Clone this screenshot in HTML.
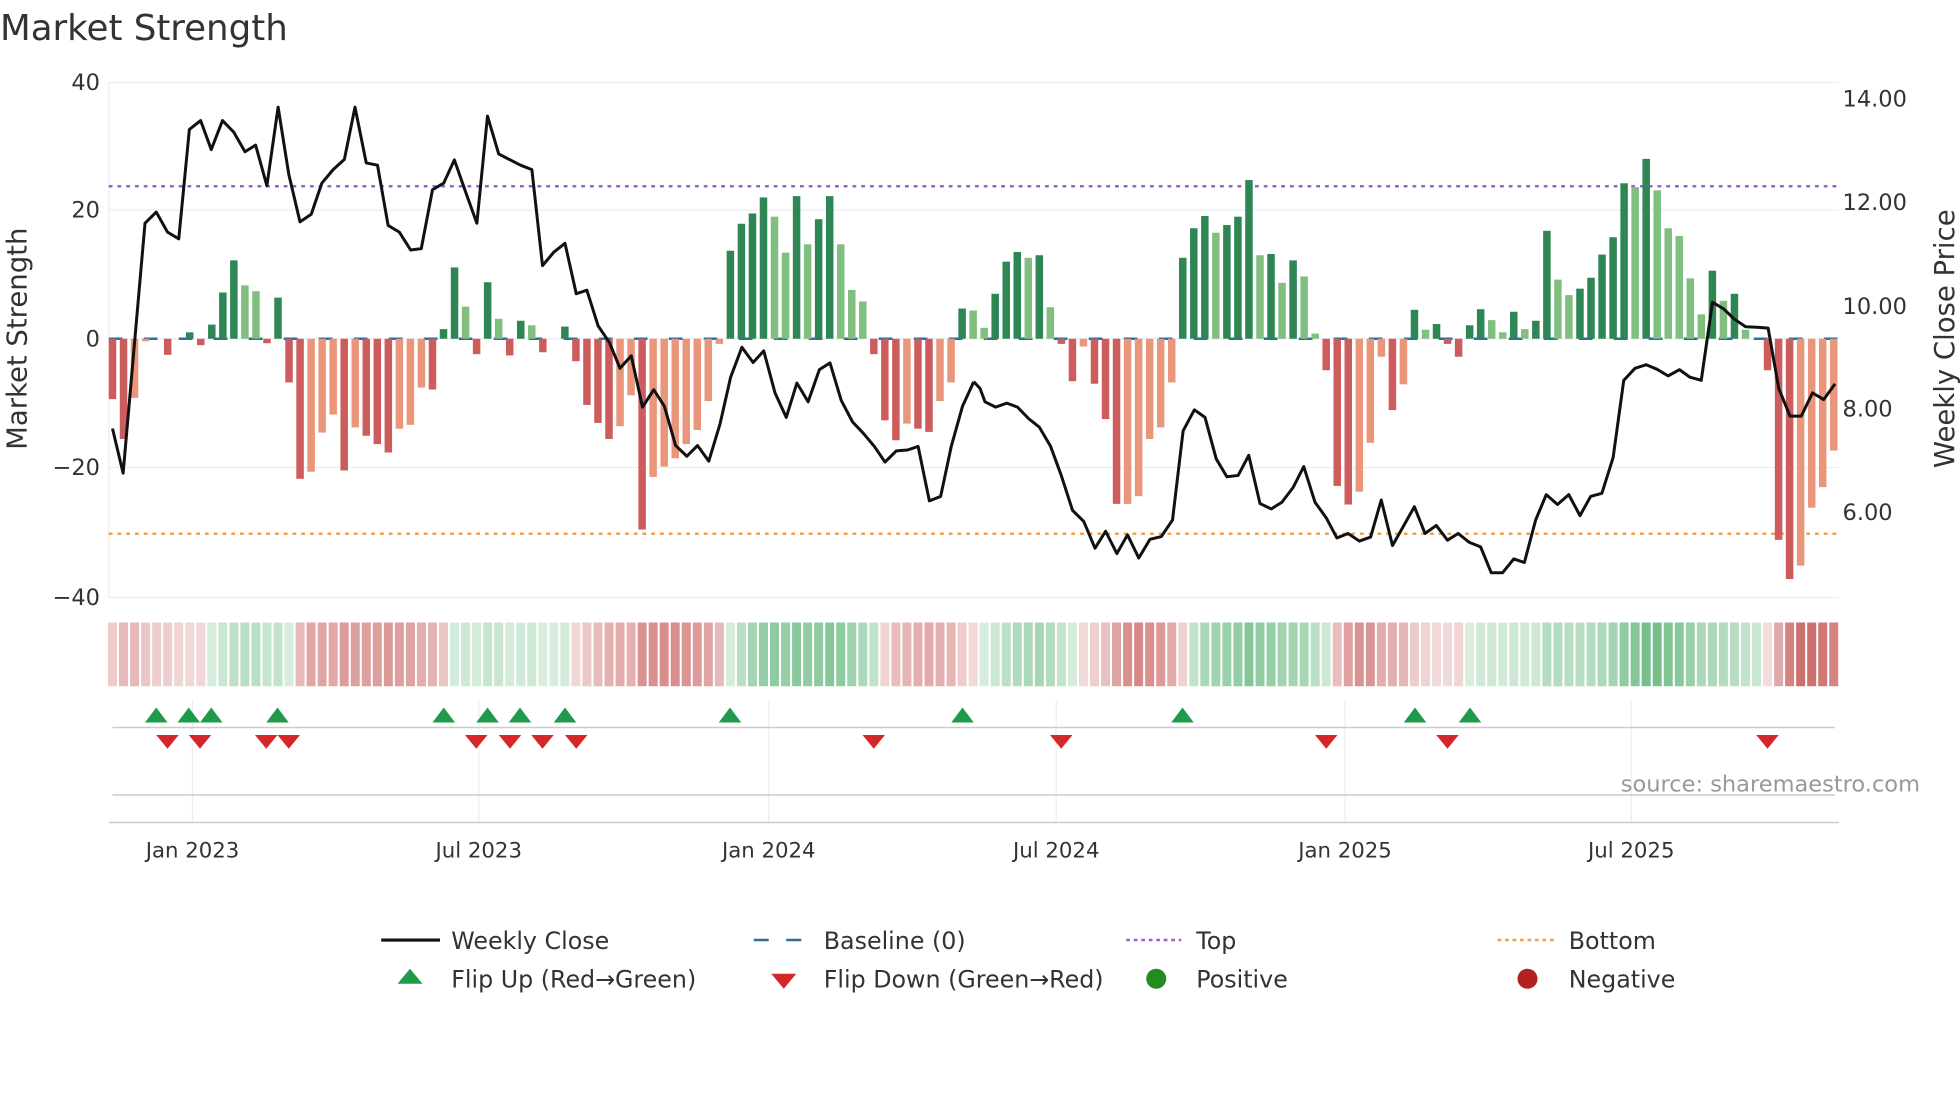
<!DOCTYPE html>
<html><head><meta charset="utf-8"><style>
html,body{margin:0;padding:0;background:#fff;}
svg{display:block;font-family:"DejaVu Sans","Liberation Sans",sans-serif;}
</style></head><body>
<svg id="s" width="1960" height="1102" viewBox="0 0 1568 881.6" xmlns="http://www.w3.org/2000/svg">
<text x="0" y="32" font-size="28.5" fill="#333">Market Strength</text>
<g stroke="#ebedf0" stroke-width="1">
<line x1="87" y1="66" x2="1471" y2="66"/><line x1="87" y1="168" x2="1471" y2="168"/>
<line x1="87" y1="271" x2="1471" y2="271"/><line x1="87" y1="374" x2="1471" y2="374"/>
<line x1="87" y1="478" x2="1471" y2="478"/><line x1="87" y1="66" x2="87" y2="478"/>
</g>
<g font-size="18" fill="#333" text-anchor="end">
<text x="80" y="72">40</text><text x="80" y="174">20</text><text x="80" y="277">0</text>
<text x="80" y="380">−20</text><text x="80" y="484">−40</text>
</g>
<g font-size="18" fill="#333">
<text x="1474" y="85">14.00</text><text x="1474" y="168">12.00</text><text x="1474" y="251">10.00</text>
<text x="1474" y="333">8.00</text><text x="1474" y="416">6.00</text>
</g>
<text transform="translate(21,271) rotate(-90)" font-size="22" fill="#333" text-anchor="middle">Market Strength</text>
<text transform="translate(1563,271) rotate(-90)" font-size="22" fill="#333" text-anchor="middle">Weekly Close Price</text>
<line x1="87" y1="149" x2="1471" y2="149" stroke="#9b5fd6" stroke-width="2" stroke-dasharray="3,4"/>
<line x1="87" y1="427" x2="1471" y2="427" stroke="#f0a050" stroke-width="2" stroke-dasharray="3,4"/>
<line x1="87" y1="271" x2="1471" y2="271" stroke="#2a6f9e" stroke-width="2" stroke-dasharray="11,17"/>
<g id="bars"></g>
<g id="strip"></g>
<g fill="none" stroke="#111" stroke-width="3" stroke-linejoin="round">
<path transform="scale(0.5,0.35714)" vector-effect="non-scaling-stroke" d="M180,960 L197,1060 L232,500 L250,475 L268,520 L286,535 L303,290 L321,270 L338,335 L356,270 L374,296 L392,340 L409,325 L427,416 L445,240 L462,390 L480,497 L498,480 L515,410 L533,380 L551,357 L568,240 L586,365 L604,370 L621,505 L639,520 L657,560 L674,557 L692,425 L710,410 L727,358 L745,430 L763,500 L780,260 L798,345 L816,358 L833,370 L851,380 L868,595 L886,565 L904,545 L922,658 L939,650 L957,730 L975,767 L992,825 L1010,797 L1028,912 L1046,873 L1063,910 L1081,998 L1099,1022 L1116,998 L1134,1033 L1152,950 L1169,845 L1187,778 L1205,812 L1222,786 L1240,880 L1258,935 L1275,858 L1293,900 L1311,828 L1328,813 L1346,897 L1364,945 L1381,970 L1399,1000 L1416,1035 L1434,1010 L1452,1008 L1469,1000 L1487,1122 L1505,1112 L1522,1000 L1540,910 L1558,855"/>
<path transform="translate(784,0) scale(0.5,0.35714)" vector-effect="non-scaling-stroke" d="M-10,855 L0,870 L8,900 L25,912 L43,903 L60,912 L78,938 L95,957 L113,1000 L130,1065 L148,1143 L166,1168 L184,1228 L201,1190 L219,1240 L236,1198 L254,1250 L272,1208 L290,1202 L308,1165 L325,965 L343,918 L360,935 L378,1028 L395,1068 L413,1065 L430,1020 L448,1128 L466,1140 L483,1125 L501,1092 L518,1045 L536,1125 L554,1160 L571,1205 L589,1195 L607,1212 L625,1203 L642,1120 L660,1222 L677,1180 L695,1135 L712,1195 L730,1177 L748,1210 L765,1195 L783,1215 L801,1225 L818,1283 L836,1283 L854,1252 L871,1260 L889,1165 L906,1108 L924,1130 L942,1108 L960,1155 L977,1112 L995,1105 L1013,1025 L1030,852 L1048,825 L1066,817 L1083,827 L1101,842 L1119,828 L1136,845 L1154,852 L1172,677 L1190,692 L1207,715 L1225,732 L1243,733 L1261,735 L1278,870 L1296,932 L1314,932 L1332,880 L1350,895 L1368,860"/>
</g>
<g stroke="#eee" stroke-width="1">
<line x1="154" y1="560" x2="154" y2="658"/><line x1="383" y1="560" x2="383" y2="658"/>
<line x1="615" y1="560" x2="615" y2="658"/><line x1="845" y1="560" x2="845" y2="658"/>
<line x1="1076" y1="560" x2="1076" y2="658"/><line x1="1305" y1="560" x2="1305" y2="658"/>
</g>
<line x1="90" y1="582" x2="1468" y2="582" stroke="#ccc" stroke-width="1.2"/>
<line x1="90" y1="636" x2="1468" y2="636" stroke="#ccc" stroke-width="1.2"/>
<line x1="87" y1="658" x2="1471" y2="658" stroke="#ccc" stroke-width="1.2"/>
<g id="mk"></g>
<text x="1536" y="633" font-size="18" fill="#999" text-anchor="end">source: sharemaestro.com</text>
<g font-size="17" fill="#333" text-anchor="middle">
<text x="154" y="686">Jan 2023</text><text x="383" y="686">Jul 2023</text><text x="615" y="686">Jan 2024</text>
<text x="845" y="686">Jul 2024</text><text x="1076" y="686">Jan 2025</text><text x="1305" y="686">Jul 2025</text>
</g>
<g font-size="19" fill="#333">
<line x1="305" y1="752" x2="352" y2="752" stroke="#111" stroke-width="2.5"/>
<text x="361" y="759">Weekly Close</text>
<line x1="603" y1="752" x2="647" y2="752" stroke="#2a6f9e" stroke-width="2" stroke-dasharray="12,14"/>
<text x="659" y="759">Baseline (0)</text>
<line x1="901" y1="752" x2="945" y2="752" stroke="#9b5fd6" stroke-width="2" stroke-dasharray="3,3"/>
<text x="957" y="759">Top</text>
<line x1="1198" y1="752" x2="1243" y2="752" stroke="#f0a050" stroke-width="2" stroke-dasharray="3,3"/>
<text x="1255" y="759">Bottom</text>
<polygon points="328,775 338,787 318,787" fill="#1e9a4a"/>
<text x="361" y="790">Flip Up (Red→Green)</text>
<polygon points="617,779 637,779 627,791" fill="#d62728"/>
<text x="659" y="790">Flip Down (Green→Red)</text>
<circle cx="925" cy="783" r="8" fill="#228b22"/>
<text x="957" y="790">Positive</text>
<circle cx="1222" cy="783" r="8" fill="#b22222"/>
<text x="1255" y="790">Negative</text>
</g>
</svg>
<script>
var v=[-9.4,-15.6,-9.2,-0.4,0,-2.5,0,1,-1,2.2,7.2,12.2,8.3,7.4,-0.7,6.4,-6.8,-21.8,-20.7,-14.6,-11.8,-20.5,-13.8,-15.1,-16.4,-17.7,-14,-13.4,-7.6,-7.9,1.5,11.1,5,-2.4,8.8,3.1,-2.6,2.8,2.1,-2.1,0,1.9,-3.5,-10.3,-13.1,-15.6,-13.6,-8.8,-29.7,-21.5,-19.9,-18.6,-16.4,-14.2,-9.7,-0.8,13.7,17.9,19.5,22,19,13.4,22.2,14.7,18.6,22.2,14.7,7.6,5.8,-2.4,-12.7,-15.8,-13.2,-14,-14.5,-9.7,-6.8,4.7,4.4,
1.7,7,12,13.5,12.6,13,4.9,-0.8,-6.6,-1.2,-7,-12.5,-25.7,-25.7,-24.5,-15.6,-13.8,-6.8,12.6,17.2,19.1,16.5,17.7,19,24.7,13,13.2,8.7,12.2,9.7,0.8,-4.9,-22.9,-25.8,-23.8,-16.2,-2.8,-11.1,-7.1,4.5,1.4,2.3,-0.8,-2.8,2.1,4.6,2.9,1,4.2,1.5,2.8,16.8,9.2,6.8,7.8,9.5,13.1,15.8,24.2,23.6,28,23.1,17.2,16,9.4,3.8,10.6,5.9,7,1.4,0,-4.9,-31.3,-37.4,-35.3,-26.3,-23.1,-17.4];
var NS="http://www.w3.org/2000/svg";
function el(p,t,a){var e=document.createElementNS(NS,t);for(var k in a)e.setAttribute(k,a[k]);document.getElementById(p).appendChild(e);}
var sp=(1467-90)/(v.length-1);
function mix(c,t){var r=Math.round(255+(c[0]-255)*t),g=Math.round(255+(c[1]-255)*t),b=Math.round(255+(c[2]-255)*t);return "rgb("+r+","+g+","+b+")";}
var sm=0;
for(var i=0;i<v.length;i++){
 var x=90+i*sp, val=v[i], p=i?v[i-1]:0;
 var dark=(Math.abs(val)>Math.abs(p))||(val*p<0);
 var col= val>=0 ? (dark?"#2e8655":"#80bf7f") : (dark?"#cd5c5c":"#e9967a");
 var h=Math.abs(val)*5.14;
 if(h>0.3) el("bars","rect",{x:x-3,y:val>=0?271-h:271,width:6,height:h,fill:col});
 sm=sm*0.6+val*0.4;
 var t=0.2+0.65*Math.min(1,Math.abs(sm)/30);
 el("strip","rect",{x:x-3.6,y:498,width:7.2,height:51,fill:sm>=0?mix([60,165,90],t):mix([192,75,72],t)});
}
[125,151,169,222,355,390,416,452,584,770,946,1132,1176].forEach(function(x){el("mk","polygon",{points:x+",566 "+(x+9)+",578 "+(x-9)+",578",fill:"#1e9a4a"});});
[134,160,213,231,381,408,434,461,699,849,1061,1158,1414].forEach(function(x){el("mk","polygon",{points:(x-9)+",588 "+(x+9)+",588 "+x+",599",fill:"#d62728"});});
</script>
</body></html>
